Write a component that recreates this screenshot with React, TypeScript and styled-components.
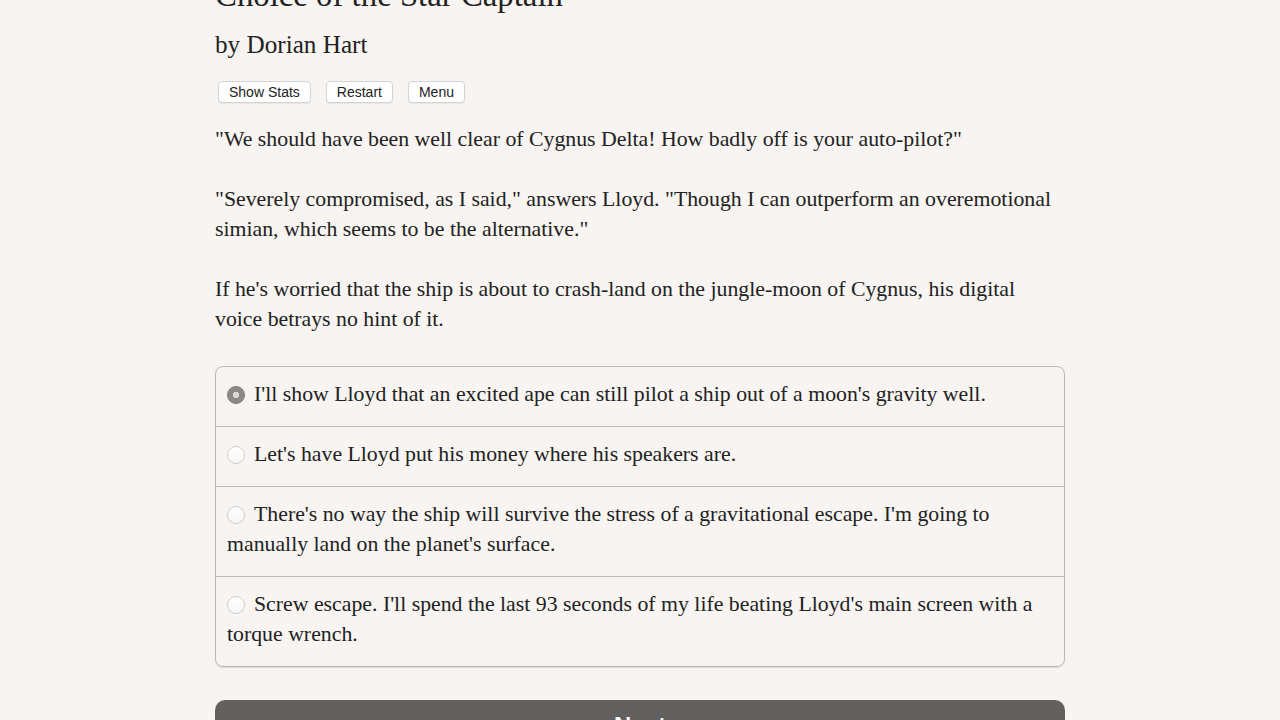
import React, { useState } from 'react';
import styled, { createGlobalStyle } from 'styled-components';

const GlobalStyle = createGlobalStyle`
  html, body {
    margin: 0;
    padding: 0;
    background: #f7f4f1;
  }
  body {
    font-family: "Liberation Serif", "Times New Roman", serif;
    color: #222;
    overflow: hidden;
  }
`;

const choices = [
  "I'll show Lloyd that an excited ape can still pilot a ship out of a moon's gravity well.",
  "Let's have Lloyd put his money where his speakers are.",
  "There's no way the ship will survive the stress of a gravitational escape. I'm going to manually land on the planet's surface.",
  "Screw escape. I'll spend the last 93 seconds of my life beating Lloyd's main screen with a torque wrench.",
];

const App = () => {
  const [selected, setSelected] = useState(0);
  return (
    <>
      <GlobalStyle />
      <Page>
        <Title>Choice of the Star Captain</Title>
        <Byline>by Dorian Hart</Byline>
        <Toolbar>
          <SmallButton>Show Stats</SmallButton>
          <SmallButton>Restart</SmallButton>
          <SmallButton>Menu</SmallButton>
        </Toolbar>
        <Para>
          "We should have been well clear of Cygnus Delta! How badly off is
          your auto-pilot?"
        </Para>
        <Para>
          "Severely compromised, as I said," answers Lloyd. "Though I can
          outperform an overemotional simian, which seems to be the
          alternative."
        </Para>
        <Para>
          If he's worried that the ship is about to crash-land on the
          jungle-moon of Cygnus, his digital voice betrays no hint of it.
        </Para>
        <ChoiceList>
          {choices.map((c, i) => (
            <ChoiceRow key={i} onClick={() => setSelected(i)}>
              <Radio $checked={selected === i} />
              {c}
            </ChoiceRow>
          ))}
        </ChoiceList>
        <NextButton>Next</NextButton>
      </Page>
    </>
  );
};

export default App;

const Page = styled.div`
  width: 850px;
  margin: 0 auto;
`;

const Title = styled.h1`
  margin: -23px 0 0;
  font-size: 32.8px;
  line-height: 36px;
  font-weight: normal;
`;

const Byline = styled.h2`
  margin: 17px 0 0;
  font-size: 25.2px;
  line-height: 30px;
  font-weight: normal;
`;

const Toolbar = styled.div`
  display: flex;
  gap: 15px;
  margin: 21px 0 0 3px;
`;

const SmallButton = styled.button`
  height: 22px;
  padding: 0 10px;
  background: #fff;
  border: 1px solid #d6d4d2;
  border-radius: 4px;
  box-shadow: 0 1px 1px rgba(0, 0, 0, 0.06);
  font-family: "Liberation Sans", Arial, sans-serif;
  font-size: 14px;
  color: #222;
`;

const Para = styled.p`
  margin: 21px 0 30px;
  font-size: 21.8px;
  line-height: 30px;
  & + & {
    margin-top: 0;
  }
`;

const ChoiceList = styled.div`
  margin-top: 32px;
  border: 1px solid #bcb9b6;
  border-radius: 8px;
  box-shadow: 0 1px 1px rgba(0, 0, 0, 0.12);
  overflow: hidden;
`;

const ChoiceRow = styled.div`
  padding: 12px 11px 17px;
  font-size: 21.8px;
  line-height: 30px;
  cursor: pointer;
  & + & {
    border-top: 1px solid #bcb9b6;
  }
`;

const Radio = styled.span<{ $checked: boolean }>`
  display: inline-block;
  box-sizing: border-box;
  width: 18px;
  height: 18px;
  margin: 0 9px -3px 0;
  border-radius: 50%;
  border: 1px solid ${(p) => (p.$checked ? '#7d7b7a' : '#cfcdcb')};
  background: ${(p) =>
    p.$checked
      ? 'radial-gradient(circle, #d9d7d5 0 3px, #8b8988 3.5px)'
      : 'linear-gradient(#fff, #f6f6f6)'};
`;

const NextButton = styled.button`
  display: block;
  width: 100%;
  height: 52px;
  margin-top: 33px;
  background: #636160;
  color: #fff;
  border: none;
  border-radius: 10px;
  font-family: "Liberation Sans", Arial, sans-serif;
  font-weight: bold;
  font-size: 24px;
`;
